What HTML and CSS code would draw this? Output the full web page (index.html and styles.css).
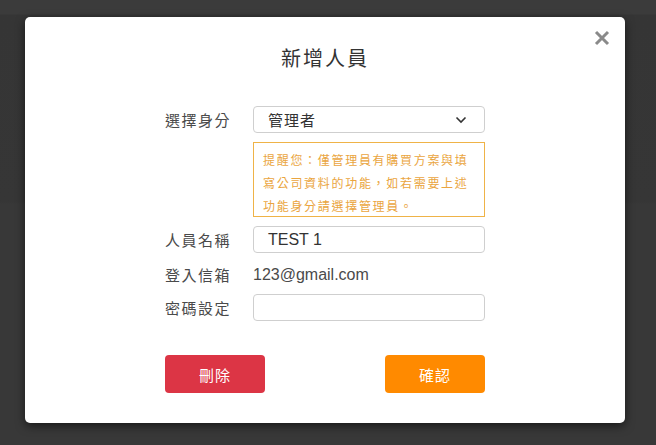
FILE: index.html
```html
<!DOCTYPE html>
<html lang="zh-Hant">
<head>
<meta charset="utf-8">
<link rel="stylesheet" href="styles.css">
</head>
<body>
<div class="backdrop">
  <div class="modal">
    <button class="close" aria-label="close">
      <svg width="16" height="16" viewBox="0 0 16 16"><path d="M2 2 L14 14 M14 2 L2 14" stroke="#8a8a8a" stroke-width="3" stroke-linecap="butt"/></svg>
    </button>
    <h2 class="title">新增人員</h2>
    <div class="form">
      <div class="row">
        <div class="label">選擇身分</div>
        <div class="field">
          <div class="select">
            <span>管理者</span>
            <svg width="12" height="8" viewBox="0 0 12 8"><path d="M1.5 1.5 L6 6 L10.5 1.5" fill="none" stroke="#333" stroke-width="1.6"/></svg>
          </div>
        </div>
      </div>
      <div class="row notice-row">
        <div class="label"></div>
        <div class="notice">提醒您：僅管理員有購買方案與填寫公司資料的功能，如若需要上述功能身分請選擇管理員。</div>
      </div>
      <div class="row">
        <div class="label">人員名稱</div>
        <div class="field"><div class="input">TEST 1</div></div>
      </div>
      <div class="row email-row">
        <div class="label">登入信箱</div>
        <div class="value">123@gmail.com</div>
      </div>
      <div class="row">
        <div class="label">密碼設定</div>
        <div class="field"><div class="input"></div></div>
      </div>
      <div class="actions">
        <button class="btn btn-delete">刪除</button>
        <button class="btn btn-confirm">確認</button>
      </div>
    </div>
  </div>
</div>
</body>
</html>
```
FILE: styles.css
```css
* { box-sizing: border-box; }
html, body { margin: 0; padding: 0; }
body {
  width: 656px;
  height: 445px;
  overflow: hidden;
  background: #373737;
  font-family: "Liberation Sans", "Noto Sans CJK TC", sans-serif;
  color: #444;
}
.backdrop {
  position: relative;
  width: 656px;
  height: 445px;
  padding-top: 17px;
  padding-left: 25px;
  background: linear-gradient(#3b3b3b 0, #3b3b3b 14px, #353535 15px, #363636 202px, #383838 204px, #383838 100%);
}
.modal {
  position: relative;
  width: 600px;
  height: 406px;
  background: #fff;
  border-radius: 5px;
  box-shadow: 0 3px 10px rgba(0,0,0,0.55);
  padding-top: 26px;
}
.close {
  position: absolute;
  top: 13px;
  right: 15px;
  width: 16px;
  height: 16px;
  padding: 0;
  border: 0;
  background: none;
  display: flex;
}
.title {
  margin: 0;
  text-align: center;
  font-family: "Noto Sans CJK TC", sans-serif;
  font-weight: 400;
  font-size: 20px;
  line-height: 30px;
  letter-spacing: 2px;
  color: #333;
}
.form {
  width: 320px;
  margin: 33px 0 0 140px;
}
.row {
  display: flex;
  align-items: center;
  height: 27px;
}
.row + .row { margin-top: 9px; }
.label {
  width: 88px;
  flex: none;
  font-family: "Noto Sans CJK TC", sans-serif;
  font-size: 15px;
  letter-spacing: 1.5px;
  color: #4a4a4a;
}
.field { flex: 1; }
.select, .input {
  height: 27px;
  border: 1px solid #cfcfcf;
  border-radius: 4px;
  display: flex;
  align-items: center;
  justify-content: space-between;
  padding: 0 17px 0 14px;
  font-size: 16px;
  color: #333;
}
.select span {
  font-family: "Noto Sans CJK TC", sans-serif;
  font-size: 15px;
  letter-spacing: 1px;
}
.notice-row { height: 75px; align-items: stretch; }
.notice {
  flex: 1;
  border: 1px solid #efb347;
  padding: 5px 8px 0 9px;
  font-family: "Noto Sans CJK TC", sans-serif;
  font-size: 12px;
  line-height: 23px;
  letter-spacing: 1.7px;
  color: #eaa540;
}
.email-row { height: 23px; margin-top: 10px !important; }
.row.email-row + .row { margin-top: 8px; }
.value {
  font-size: 16px;
  color: #4a4a4a;
}
.actions {
  display: flex;
  justify-content: space-between;
  margin-top: 34px;
}
.btn {
  width: 100px;
  height: 38px;
  border: 0;
  border-radius: 4px;
  color: #fff;
  font-family: "Noto Sans CJK TC", sans-serif;
  font-size: 15px;
  letter-spacing: 1px;
}
.btn-delete { background: #dc3545; }
.btn-confirm { background: #ff8a00; }
```
